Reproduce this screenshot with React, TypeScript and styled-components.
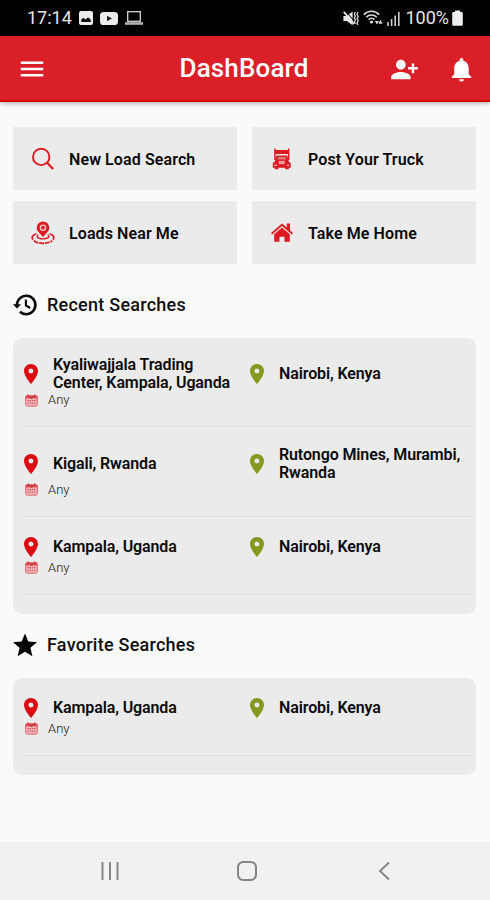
import React from 'react';
import styled, { createGlobalStyle } from 'styled-components';
import {
  MdMenu,
  MdPersonAddAlt1,
  MdNotifications,
  MdLocationOn,
} from 'react-icons/md';

const RED = '#db1f28';
const ICON_RED = '#dc1a22';

const GlobalStyle = createGlobalStyle`
  *, *::before, *::after { box-sizing: border-box; }
  html, body { margin: 0; padding: 0; background: #fafafa; }
  body { font-family: Roboto, "Liberation Sans", sans-serif; color: #0e0e0e; }
  svg { display: block; flex: none; }
`;

const Screen = styled.div`
  width: 490px;
  height: 900px;
  display: flex;
  flex-direction: column;
  background: #fafafa;
  overflow: hidden;
`;

const StatusBar = styled.div`
  height: 36px;
  flex: none;
  display: flex;
  justify-content: space-between;
  align-items: center;
  padding: 0 27px 0 27px;
  background: #000;
  color: #e6e6e6;
`;

const StatusGroup = styled.div<{ $gap: number }>`
  display: flex;
  align-items: center;
  gap: ${(p) => p.$gap}px;
`;

const StatusText = styled.span`
  font-size: 18px;
  line-height: 20px;
`;

const BatteryLevel = styled(StatusText)`
  margin: 0 -1px 0 1px;
`;

const AppBar = styled.header`
  height: 66px;
  flex: none;
  display: grid;
  grid-template-columns: 1fr auto 1fr;
  align-items: center;
  padding: 2px 14px 0 17px;
  background: ${RED};
  border-bottom: 2px solid #d5060c;
  color: #fff;
  box-shadow: 0 1px 5px rgba(0, 0, 0, 0.35);
`;

const AppTitle = styled.h1`
  margin: -2px 5px 0 0;
  font-size: 26px;
  font-weight: 500;
  line-height: 30px;
  letter-spacing: 0.15px;
`;

const IconButton = styled.button`
  display: flex;
  padding: 0;
  border: 0;
  background: none;
  color: inherit;
`;

const AppActions = styled.div`
  display: flex;
  justify-content: flex-end;
  align-items: center;
  gap: 28px;
`;

const Content = styled.main`
  flex: 1;
  padding: 25px 14px 0 13px;
`;

const TileGrid = styled.div`
  display: grid;
  grid-template-columns: 224px 224px;
  grid-auto-rows: 63px;
  gap: 11px 15px;
`;

const Tile = styled.button`
  display: flex;
  align-items: center;
  gap: 14px;
  padding: 1px 0 0 18px;
  border: 0;
  background: #ebebeb;
  color: #0a0a0a;
  font: 600 16px/20px Roboto, "Liberation Sans", sans-serif;
  letter-spacing: 0.1px;
  text-align: left;
`;

const TileLabel = styled.span`
  padding-top: 2px;
`;

const SectionHeading = styled.h2<{ $top: number }>`
  display: flex;
  align-items: center;
  gap: 9px;
  height: 26px;
  margin: ${(p) => p.$top}px 0 20px -1px;
  font-size: 18px;
  font-weight: 500;
  line-height: 26px;
  letter-spacing: 0.25px;
`;

const Card = styled.section`
  padding: 0 3px 19.1px 8px;
  border-radius: 9px;
  background: #ebebeb;
`;

const Row = styled.article`
  padding: 18.4px 0 18px;
  border-bottom: 1px solid #dfdfdf;
`;

const Places = styled.div`
  display: grid;
  grid-template-columns: 226px 1fr;
  align-items: center;
  margin-left: -2px;
`;

const Place = styled.div<{ $color: string }>`
  display: flex;
  align-items: center;
  gap: 10px;
  min-height: 24.5px;
  color: ${(p) => p.$color};
`;

const PlaceName = styled.span`
  color: #0a0a0a;
  font-size: 16px;
  font-weight: 600;
  line-height: 18px;
  letter-spacing: -0.12px;
  white-space: pre;
`;

const DateLine = styled.div`
  display: flex;
  align-items: center;
  gap: 10px;
  height: 16px;
  padding-left: 4px;
  color: #111;
  font-size: 13px;
  font-weight: 300;
  line-height: 16px;
`;

const NavBar = styled.nav`
  height: 58px;
  flex: none;
  display: grid;
  grid-template-columns: repeat(3, 137px);
  align-items: center;
  justify-items: center;
  padding-left: 41px;
  background: #f1f1f1;
  color: #858585;
`;

const PictureIcon = () => (
  <svg width="14" height="14" viewBox="0 0 14 14">
    <rect width="14" height="14" rx="2" fill="#ececec" />
    <path d="M2.2 11V8.6l2.3-1.8 2 1.7 2.6-2.3 2.7 2.6V11z" fill="#111" />
  </svg>
);

const VideoIcon = () => (
  <svg width="18" height="13" viewBox="0 0 18 13">
    <rect width="18" height="13" rx="3.6" fill="#ececec" />
    <path d="M7 3.8v5.4l5-2.7z" fill="#222" />
  </svg>
);

const LaptopIcon = () => (
  <svg width="18" height="14" viewBox="0 0 18 14">
    <rect x="2.7" y="0.7" width="12.6" height="9.6" fill="none" stroke="#d6d6d6" strokeWidth="1.3" />
    <path d="M0 11.2h18v2.6H0z" fill="#b4b4b4" />
  </svg>
);

const MuteVibrateIcon = () => (
  <svg width="16" height="15" viewBox="0 0 16 15" fill="none" stroke="#e6e6e6">
    <path d="M.4 5h3.4L9.6.4v13.8L3.8 10H.4z" fill="#e6e6e6" stroke="none" />
    <path d="M3.4 1l7.4 8.6" stroke="#000" strokeWidth="1" />
    <path d="M.8 .8L11 13" strokeWidth="1.8" />
    <path d="M12.4 1l-1 2 1 2-1 2 1 2-1 2 1 2M15.2 1l-1.2 2.2 1.2 2.2L14 7.6l1.2 2.2-1.2 2.2 1 2" strokeWidth="1.2" />
  </svg>
);

const WifiIcon = () => (
  <svg width="20" height="16" viewBox="0 0 20 16" fill="none" stroke="#d9d9d9" strokeWidth="1.6">
    <path d="M0.8 4.6C5 0.2 12 0.2 16.2 4.6M3.2 7.2c3-3 7.6-3 10.6 0M5.6 9.6c1.7-1.6 4.1-1.6 5.8 0" />
    <circle cx="8.5" cy="12" r="1.6" fill="#d9d9d9" stroke="none" />
    <path d="M11.8 11l2.1 3.4 2-3.4zM15.4 13.8l2-4 2.1 4z" fill="#d9d9d9" stroke="none" />
  </svg>
);

const SignalIcon = () => (
  <svg width="13" height="15" viewBox="0 0 13 15" stroke="#cfcfcf" strokeWidth="1.6">
    <path d="M1 15v-4M4.6 15V8M8.2 15V4.5M11.8 15V1" />
  </svg>
);

const BatteryIcon = () => (
  <svg width="11" height="16" viewBox="0 0 11 16" fill="#ededed">
    <path d="M3 0.5h5V2h1.6A1.2 1.2 0 0 1 10.8 3.2v11.3A1.2 1.2 0 0 1 9.6 15.7H1.4A1.2 1.2 0 0 1 .2 14.5V3.2A1.2 1.2 0 0 1 1.4 2H3z" />
  </svg>
);

const SearchIcon = () => (
  <svg width="24" height="24" viewBox="0 0 24 24" fill="none" stroke={ICON_RED}>
    <circle cx="10.2" cy="9.9" r="8.2" strokeWidth="1.9" />
    <path d="M16 15.8l6.2 6.2" strokeWidth="2.3" />
  </svg>
);

const TruckIcon = () => (
  <svg width="24" height="24" viewBox="0 0 24 24" fill={ICON_RED}>
    <path d="M4.2 1.4h1.5V3h12.2V1.4h1.5V13h-1.5V7H5.7v6H4.2z" />
    <path d="M5.5 3h12.6v3.4H5.5z" opacity=".75" />
    <path d="M6.4 8.6h10.8l1.6 5.8 2 1.8v4.6h-2v1.4h-3.6v-1.4H8.4v1.4H4.8v-1.4h-2v-4.6l2-1.8z" />
    <path d="M8 10h7.6l.7 2.4H7.3z" fill="#e5757a" />
    <path d="M8.8 13.8h6v3.4h-6z" fill="#ee9a9d" />
    <path d="M4.4 17.8h2.4v1.1H4.4zM16.8 17.8h2.4v1.1h-2.4z" fill="#f1c4c6" />
  </svg>
);

const NearMeIcon = () => (
  <svg width="24" height="24" viewBox="0 0 24 24" fill="none" stroke={ICON_RED}>
    <path d="M7.4 13.8c-2.6 1.2-1.4 4 4.6 4s7.2-2.8 4.6-4" strokeWidth="1.3" />
    <path d="M5.4 12.8C1.2 14 .2 16.4 2 18.8" strokeWidth="1.7" />
    <path d="M18.6 12.8c4.2 1.2 5.2 3.6 3.4 6" strokeWidth="1.7" />
    <path d="M2.8 19.6c4 3.6 14.4 3.6 18.4 0" strokeWidth="1.8" strokeDasharray="5 .8" />
    <path
      d="M12 .4a6.3 6.3 0 0 0-6.3 6.3c0 4 4.3 6 6.3 9.6 2-3.6 6.3-5.6 6.3-9.6A6.3 6.3 0 0 0 12 .4z"
      fill={ICON_RED}
      stroke="none"
    />
    <circle cx="12" cy="6.7" r="2.6" stroke="#f3c9ca" strokeWidth="1.4" />
  </svg>
);

const HomeIcon = () => (
  <svg width="24" height="24" viewBox="0 0 24 24" fill={ICON_RED}>
    <path d="M12 2.4l4.8 4.1V2.6H20v6.7l3 2.6-1.2 1.5L12 5.1l-9.8 8.3L1 11.9z" />
    <path d="M12 6.6l7.8 6.6v7.5h-5.3v-5H9.5v5H4.2v-7.5z" />
  </svg>
);

const HistoryIcon = () => (
  <svg width="26" height="26" viewBox="0 0 26 26" fill="none" stroke="#0a0a0a">
    <path d="M5 13a9.2 9.2 0 1 1 2.9 6.7" strokeWidth="2.6" />
    <path d="M.9 12.2h8.2L5 16.6z" fill="#0a0a0a" stroke="none" />
    <path d="M13.9 7.6v5.8l4.2 2.6" strokeWidth="2.1" />
  </svg>
);

const StarIcon = () => (
  <svg width="26" height="26" viewBox="0 0 26 26" fill="#000">
    <path d="M13 1.5l3.3 8 8.7.7-6.6 5.6 2 8.5L13 19.8l-7.4 4.5 2-8.5L1 10.2l8.7-.7z" />
  </svg>
);

const CalendarIcon = () => (
  <svg width="13" height="13" viewBox="0 0 13 13">
    <rect x="0.6" y="1.8" width="11.8" height="10.4" rx="1.8" fill="#eeb3b6" stroke="#df6d72" strokeWidth="1" />
    <path d="M.4 4.6V3.2c0-1 .6-1.6 1.6-1.6h9c1 0 1.6.6 1.6 1.6v1.4z" fill="#dc5258" />
    <path d="M3.2.5v2.8M9.8.5v2.8" stroke="#cf2830" strokeWidth="1.2" />
    <path d="M5 2.6l1.5 1.8L8 2.6" stroke="#b71820" strokeWidth="1" fill="none" />
    <path d="M2.4 6.6h8.2M2.4 9.3h8.2" stroke="#d6545a" strokeWidth="1.1" strokeDasharray="1.4 .8" />
  </svg>
);

const RecentsIcon = () => (
  <svg width="20" height="20" viewBox="0 0 20 20" stroke="currentColor" strokeWidth="2">
    <path d="M2.5 1v18M10 1v18M17.5 1v18" />
  </svg>
);

const HomeKeyIcon = () => (
  <svg width="22" height="22" viewBox="0 0 22 22" fill="none" stroke="currentColor" strokeWidth="2">
    <rect x="2" y="2" width="18" height="18" rx="5.2" />
  </svg>
);

const BackIcon = () => (
  <svg width="14" height="20" viewBox="0 0 14 20" fill="none" stroke="currentColor" strokeWidth="1.9">
    <path d="M12 1.5L3 10l9 8.5" />
  </svg>
);

type Search = { from: string; to: string; date: string };

const recent: Search[] = [
  { from: 'Kyaliwajjala Trading\nCenter, Kampala, Uganda', to: 'Nairobi, Kenya', date: 'Any' },
  { from: 'Kigali, Rwanda', to: 'Rutongo Mines, Murambi,\nRwanda', date: 'Any' },
  { from: 'Kampala, Uganda', to: 'Nairobi, Kenya', date: 'Any' },
];

const favorites: Search[] = [{ from: 'Kampala, Uganda', to: 'Nairobi, Kenya', date: 'Any' }];

const tiles = [
  { label: 'New Load Search', Icon: SearchIcon },
  { label: 'Post Your Truck', Icon: TruckIcon },
  { label: 'Loads Near Me', Icon: NearMeIcon },
  { label: 'Take Me Home', Icon: HomeIcon },
];

const SearchRow = ({ from, to, date }: Search) => (
  <Row>
    <Places>
      <Place $color="#db0b14">
        <MdLocationOn size={24} />
        <PlaceName>{from}</PlaceName>
      </Place>
      <Place $color="#86981f">
        <MdLocationOn size={24} />
        <PlaceName>{to}</PlaceName>
      </Place>
    </Places>
    <DateLine>
      <CalendarIcon />
      {date}
    </DateLine>
  </Row>
);

const SearchCard = ({ items }: { items: Search[] }) => (
  <Card>
    {items.map((item) => (
      <SearchRow key={item.from} {...item} />
    ))}
  </Card>
);

export default function App() {
  return (
    <Screen>
      <GlobalStyle />
      <StatusBar>
        <StatusGroup $gap={7}>
          <StatusText>17:14</StatusText>
          <PictureIcon />
          <VideoIcon />
          <LaptopIcon />
        </StatusGroup>
        <StatusGroup $gap={4}>
          <MuteVibrateIcon />
          <WifiIcon />
          <SignalIcon />
          <BatteryLevel>100%</BatteryLevel>
          <BatteryIcon />
        </StatusGroup>
      </StatusBar>
      <AppBar>
        <IconButton aria-label="Menu">
          <MdMenu size={30} />
        </IconButton>
        <AppTitle>DashBoard</AppTitle>
        <AppActions>
          <IconButton aria-label="Add person">
            <MdPersonAddAlt1 size={29} />
          </IconButton>
          <IconButton aria-label="Notifications">
            <MdNotifications size={29} />
          </IconButton>
        </AppActions>
      </AppBar>
      <Content>
        <TileGrid>
          {tiles.map(({ label, Icon }) => (
            <Tile key={label}>
              <Icon />
              <TileLabel>{label}</TileLabel>
            </Tile>
          ))}
        </TileGrid>
        <SectionHeading $top={28}>
          <HistoryIcon />
          Recent Searches
        </SectionHeading>
        <SearchCard items={recent} />
        <SectionHeading $top={18}>
          <StarIcon />
          Favorite Searches
        </SectionHeading>
        <SearchCard items={favorites} />
      </Content>
      <NavBar>
        <RecentsIcon />
        <HomeKeyIcon />
        <BackIcon />
      </NavBar>
    </Screen>
  );
}
